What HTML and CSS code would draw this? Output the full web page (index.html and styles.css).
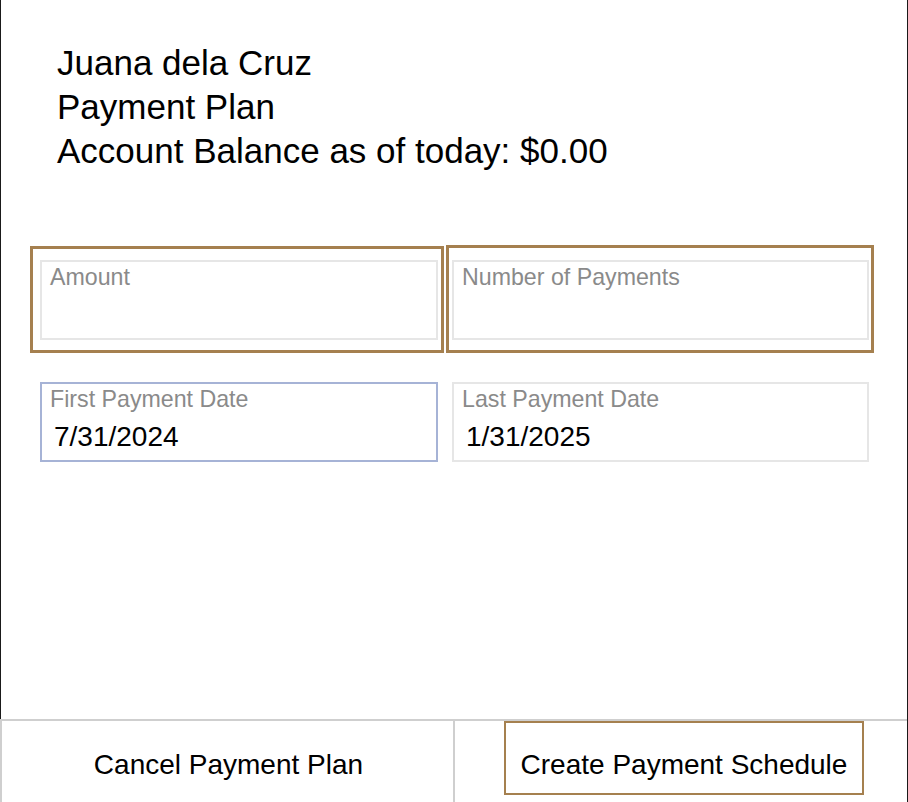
FILE: index.html
```html
<!DOCTYPE html>
<html lang="en">
<head>
<meta charset="utf-8">
<title>Payment Plan</title>
<link rel="stylesheet" href="styles.css">
</head>
<body>
<div class="screen">
  <main class="main">
    <header class="summary">
      <div class="summary-line">Juana dela Cruz</div>
      <div class="summary-line">Payment Plan</div>
      <div class="summary-line">Account Balance as of today: $0.00</div>
    </header>
    <section class="form">
      <div class="field field--amount is-highlighted">
        <div class="field-label">Amount</div>
        <div class="field-value"></div>
      </div>
      <div class="field field--count is-highlighted">
        <div class="field-label">Number of Payments</div>
        <div class="field-value"></div>
      </div>
      <div class="field field--focused">
        <div class="field-label">First Payment Date</div>
        <div class="field-value">7/31/2024</div>
      </div>
      <div class="field">
        <div class="field-label">Last Payment Date</div>
        <div class="field-value">1/31/2025</div>
      </div>
    </section>
  </main>
  <footer class="actions">
    <div class="action-cell action-cell--left">
      <button class="action-btn" type="button">Cancel Payment Plan</button>
    </div>
    <div class="action-cell action-cell--right">
      <button class="action-btn action-btn--primary" type="button">Create Payment Schedule</button>
    </div>
  </footer>
</div>
</body>
</html>
```

FILE: styles.css
```css
* { box-sizing: border-box; }

html, body {
  margin: 0;
  padding: 0;
  background: #ffffff;
  overflow: hidden;
}

body {
  font-family: "Liberation Sans", Arial, Helvetica, sans-serif;
  color: #000;
}

.screen {
  width: 908px;
  height: 802px;
  display: flex;
  flex-direction: column;
  border-right: 1px solid #1a1a1a;
}

.main {
  flex: 1;
  border-left: 1px solid #1a1a1a;
  padding-top: 41px;
}

.summary {
  padding-left: 56px;
}

.summary-line {
  font-size: 35px;
  line-height: 44px;
  color: #000;
}

.form {
  margin-top: 87px;
  padding-left: 39px;
  display: grid;
  grid-template-columns: 398px 417px;
  column-gap: 14px;
  row-gap: 42px;
}

.field {
  position: relative;
  height: 80px;
  border: 2px solid #e6e6e6;
  padding: 2px 8px 0;
}

.field--focused {
  border-color: #a6b3d6;
}

.is-highlighted::before {
  content: "";
  position: absolute;
  border: 3px solid #a5804f;
  pointer-events: none;
}

.field--amount::before {
  top: -16px;
  left: -12px;
  right: -8px;
  bottom: -15px;
}

.field--count::before {
  top: -17px;
  left: -8px;
  right: -7px;
  bottom: -15px;
}

.field-label {
  font-size: 23.2px;
  line-height: 26px;
  color: #8a8a8a;
}

.field-value {
  margin-top: 9px;
  padding-left: 4px;
  font-size: 28px;
  line-height: 32px;
  color: #000;
}

.actions {
  height: 83px;
  display: flex;
  border-top: 2px solid #cfcfcf;
  border-left: 2px solid #cfcfcf;
}

.action-cell {
  display: flex;
  justify-content: center;
  align-items: flex-start;
}

.action-cell--left {
  width: 453px;
  border-right: 2px solid #cfcfcf;
  padding-top: 28px;
  padding-left: 2px;
}

.action-cell--right {
  flex: 1;
  padding-left: 6px;
}

.action-btn {
  font-family: "Liberation Sans", Arial, Helvetica, sans-serif;
  font-size: 28px;
  line-height: 32px;
  color: #000;
  background: none;
  border: none;
  padding: 0;
  margin: 0;
}

.action-btn--primary {
  border: 2px solid #a5804f;
  padding: 26px 15px 12px;
}
```
